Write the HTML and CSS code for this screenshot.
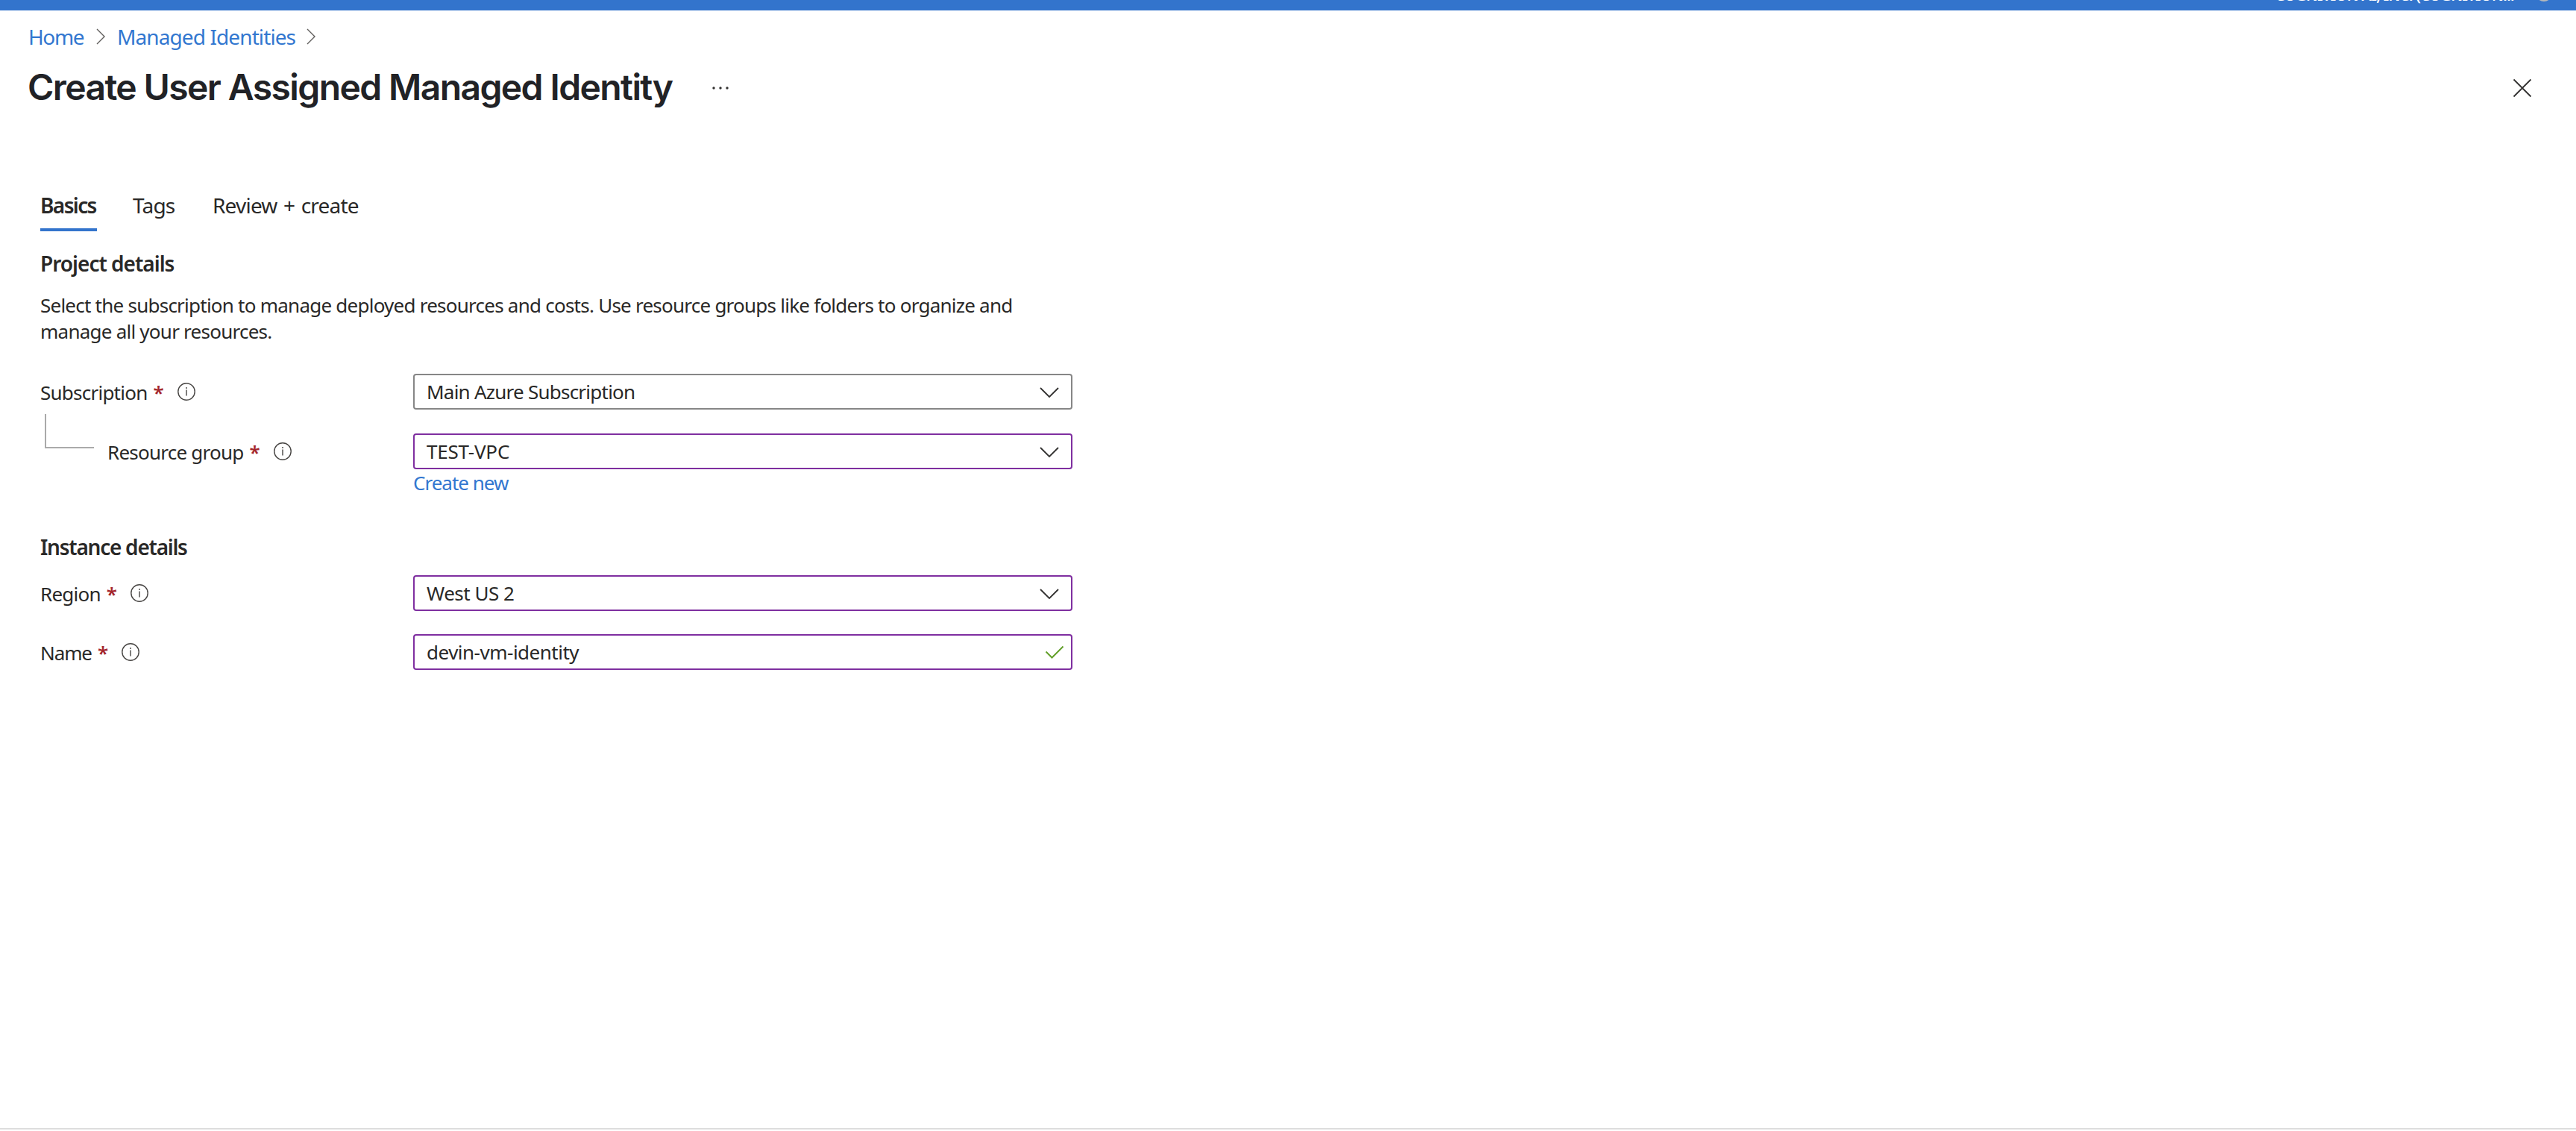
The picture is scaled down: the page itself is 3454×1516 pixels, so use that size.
FILE: index.html
```html
<!DOCTYPE html>
<html lang="en">
<head>
    <meta charset="UTF-8">
    <meta name="viewport" content="width=device-width, initial-scale=1.0">
    <title>Create User Assigned Managed Identity</title>
    <link rel="stylesheet" href="styles.css">
</head>
<body>
    <header class="topbar">
        <span class="tenant">COGNITION AI, INC. (COGNITION...</span>
        <span class="avatar"></span>
    </header>
    <nav class="breadcrumb">
        <a class="crumb-home" href="#">Home</a>
        <svg class="crumb-arrow" viewBox="0 0 12 22"><path d="M1 1l10 10L1 21"/></svg>
        <a class="crumb-list" href="#">Managed Identities</a>
        <svg class="crumb-arrow" viewBox="0 0 12 22"><path d="M1 1l10 10L1 21"/></svg>
    </nav>
    <div class="title-row">
        <h1>Create User Assigned Managed Identity</h1>
        <svg class="more" viewBox="0 0 24 6"><circle cx="3" cy="3" r="1.7"/><circle cx="12" cy="3" r="1.7"/><circle cx="21" cy="3" r="1.7"/></svg>
        <svg class="close" viewBox="0 0 26 26"><path d="M1.5 1.5l23 23M24.5 1.5l-23 23"/></svg>
    </div>
    <main>
        <div class="tabs">
            <div class="tab active">Basics</div>
            <div class="tab tags">Tags</div>
            <div class="tab review">Review + create</div>
        </div>

        <h2>Project details</h2>
        <p class="description">Select the subscription to manage deployed resources and costs. Use resource groups like folders to organize and<br>manage all your resources.</p>

        <div class="row">
            <div class="label">
                <span class="label-text">Subscription</span><span class="required">*</span>
                <svg class="info" viewBox="0 0 24 24"><circle cx="12" cy="12" r="11.2"/><path d="M12 9.5v8M12 6v2"/></svg>
            </div>
            <div class="field">
                <span>Main Azure Subscription</span>
                <svg class="chevron" viewBox="0 0 26 15"><path d="M1 1l12 12L25 1"/></svg>
            </div>
        </div>
        <div class="row resource">
            <div class="label">
                <span class="branch"></span>
                <span class="label-text">Resource group</span><span class="required">*</span>
                <svg class="info" viewBox="0 0 24 24"><circle cx="12" cy="12" r="11.2"/><path d="M12 9.5v8M12 6v2"/></svg>
            </div>
            <div class="field changed">
                <span>TEST-VPC</span>
                <svg class="chevron" viewBox="0 0 26 15"><path d="M1 1l12 12L25 1"/></svg>
            </div>
        </div>
        <a class="create-new" href="#">Create new</a>

        <h2 class="instance">Instance details</h2>
        <div class="row region">
            <div class="label">
                <span class="label-text">Region</span><span class="required">*</span>
                <svg class="info" viewBox="0 0 24 24"><circle cx="12" cy="12" r="11.2"/><path d="M12 9.5v8M12 6v2"/></svg>
            </div>
            <div class="field changed">
                <span>West US 2</span>
                <svg class="chevron" viewBox="0 0 26 15"><path d="M1 1l12 12L25 1"/></svg>
            </div>
        </div>
        <div class="row name">
            <div class="label">
                <span class="label-text">Name</span><span class="required">*</span>
                <svg class="info" viewBox="0 0 24 24"><circle cx="12" cy="12" r="11.2"/><path d="M12 9.5v8M12 6v2"/></svg>
            </div>
            <div class="field changed">
                <span>devin-vm-identity</span>
                <svg class="check" viewBox="0 0 26 18"><path d="M1.5 8.5l8 8L24.5 1.5"/></svg>
            </div>
        </div>
    </main>
    <footer></footer>
</body>
</html>
```
FILE: styles.css
```css
* {
    box-sizing: border-box;
}

body {
    margin: 0;
    height: 1516px;
    display: flex;
    flex-direction: column;
    overflow: hidden;
    background-color: #fff;
    color: #292827;
    font-family: "Noto Sans", "Open Sans", sans-serif;
    font-size: 26px;
    letter-spacing: -0.76px;
}

a {
    color: #3277d0;
    text-decoration: none;
}

svg {
    display: block;
    flex: none;
    fill: none;
    stroke: #323130;
    stroke-width: 1.8;
}

.topbar {
    display: flex;
    justify-content: flex-end;
    align-items: flex-end;
    height: 14px;
    flex: none;
    padding-right: 32px;
    background-color: #3374cc;
    overflow: hidden;
}

.tenant {
    color: #fff;
    font-size: 20px;
    line-height: 30px;
    font-weight: 600;
    letter-spacing: -0.6px;
    margin-bottom: 5px;
    margin-right: 29px;
    white-space: nowrap;
}

.avatar {
    width: 22px;
    height: 22px;
    border-radius: 50%;
    background-color: #b4b8bb;
    margin-bottom: 12px;
}

.breadcrumb {
    display: flex;
    align-items: center;
    height: 40px;
    margin-top: 15px;
    padding-left: 38px;
    font-size: 28px;
    line-height: 40px;
    letter-spacing: -0.9px;
}

.crumb-home {
    width: 91px;
    letter-spacing: -1.4px;
}

.crumb-list {
    width: 254px;
    margin-left: 16px;
}

.crumb-arrow {
    width: 12px;
    height: 22px;
    stroke: #605e5c;
    stroke-width: 1.4;
}

.title-row {
    display: flex;
    align-items: center;
    height: 60px;
    margin-top: 18px;
    padding: 0 59px 0 37px;
}

h1 {
    margin: 0;
    width: 917px;
    color: #212226;
    font-family: Inter, sans-serif;
    font-size: 48px;
    line-height: 60px;
    font-weight: 600;
    letter-spacing: -1.6px;
    white-space: nowrap;
}

.more {
    width: 24px;
    height: 6px;
    margin-top: 2px;
    fill: #323130;
    stroke: none;
}

.close {
    width: 26px;
    height: 26px;
    margin-left: auto;
    margin-top: 2px;
}

main {
    flex: 1;
    padding: 108px 0 0 54px;
}

.tabs {
    display: flex;
    font-size: 28px;
    line-height: 40px;
    letter-spacing: -0.8px;
    white-space: nowrap;
}

.tab {
    height: 55px;
    margin-right: 48px;
}

.tab.active {
    width: 76px;
    font-weight: 600;
    letter-spacing: -1.6px;
    border-bottom: 4px solid #3374cc;
}

.tab.tags {
    width: 59px;
}

.tab.review {
    word-spacing: 2px;
}

h2 {
    margin: 23px 0 0;
    font-size: 28px;
    line-height: 40px;
    font-weight: 600;
    letter-spacing: -1px;
}

h2.instance {
    margin-top: 48px;
    letter-spacing: -1.25px;
}

.description {
    margin: 19px 0 39px;
    line-height: 35px;
    white-space: nowrap;
}

.row {
    display: flex;
    height: 48px;
}

.row.resource {
    margin-top: 32px;
}

.row.region {
    margin-top: 18px;
}

.row.name {
    margin-top: 31px;
}

.label {
    display: flex;
    width: 500px;
    line-height: 50px;
}

.name .label {
    letter-spacing: -1.1px;
}

.branch {
    width: 66px;
    height: 46px;
    margin: -26px 18px 0 6px;
    border-left: 2px solid #aaa;
    border-bottom: 2px solid #aaa;
}

.required {
    margin-left: 8px;
    color: #a4262c;
    font-size: 26px;
    line-height: 50px;
    font-weight: 600;
}

.info {
    width: 24px;
    height: 24px;
    margin: 12px 0 0 19px;
    stroke: #484644;
    stroke-width: 1.4;
}

.field {
    display: flex;
    justify-content: space-between;
    width: 884px;
    height: 48px;
    padding: 0 16px 0 16px;
    border: 2px solid #868686;
    border-radius: 4px;
    line-height: 44px;
}

.field.changed {
    border-color: #7f2fa0;
    letter-spacing: -0.5px;
}

.resource .field {
    letter-spacing: -0.2px;
}

.chevron {
    width: 26px;
    height: 15px;
    margin-top: 16px;
}

.check {
    width: 26px;
    height: 18px;
    margin: 13px -7px 0 0;
    stroke: #64a02c;
    stroke-width: 2;
}

.create-new {
    display: block;
    margin-left: 500px;
    line-height: 36px;
    letter-spacing: -1px;
}

footer {
    flex: none;
    height: 4px;
    border-top: 2px solid #ddd;
}
```
